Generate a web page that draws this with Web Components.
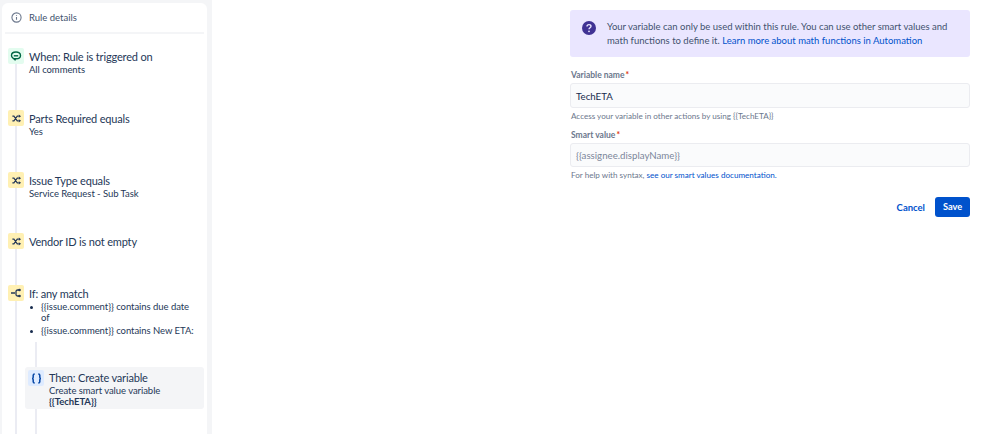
<!DOCTYPE html>
<html>
<head>
<meta charset="utf-8">
<title>Rule details</title>
<style>
  html, body { margin: 0; height: 100%; }
  body { background: #fff; font-family: Lato, "Noto Sans", sans-serif; color: #172b4d; overflow: hidden; }
  rule-page { height: 434px; }
</style>
</head>
<body>
<template id="shuffle-icon">
  <svg width="11" height="11" viewBox="0 0 12 12" fill="none" stroke="#253858" stroke-width="1.3">
    <path d="M1.500 3.500h1.700l3.600 5h1.700M1.500 8.500h1.700l3.600-5h1.700"/>
    <path d="M8.500 1.700v3.600l2.500-1.800zM8.500 6.700v3.600l2.500-1.800z" fill="#253858" stroke="none"/>
  </svg>
</template>
<template id="branch-icon">
  <svg width="12" height="12" viewBox="0 0 12 12" fill="none" stroke="#253858" stroke-width="1.3">
    <path d="M1 6h4M9 3H7.500A1.500 1.500 0 0 0 6 4.500v3A1.500 1.500 0 0 0 7.500 9H9"/>
    <circle cx="9.500" cy="3" r="1.300" fill="#253858" stroke="none"/>
    <circle cx="9.500" cy="9" r="1.300" fill="#253858" stroke="none"/>
  </svg>
</template>
<rule-page>
  <rule-sidebar slot="side">
    <rule-step tone="green" icon="comment" title="When: Rule is triggered on" style="height:62px"><span>All comments</span></rule-step>
    <rule-step tone="yellow" icon="shuffle" title="Parts Required equals" style="height:62px"><span>Yes</span></rule-step>
    <rule-step tone="yellow" icon="shuffle" title="Issue Type equals" style="height:61px"><span>Service Request - Sub Task</span></rule-step>
    <rule-step tone="yellow" icon="shuffle" title="Vendor ID is not empty" style="height:52px"></rule-step>
    <rule-step tone="yellow" icon="branch" title="If: any match" style="height:82px">
      <rule-cond>{{issue.comment}} contains due date of</rule-cond>
      <rule-cond>{{issue.comment}} contains New ETA:</rule-cond>
    </rule-step>
    <rule-step nested tone="blue" icon="braces" title="Then: Create variable">
      <span>Create smart value variable<br><b>{{TechETA}}</b></span>
    </rule-step>
  </rule-sidebar>
  <variable-form slot="main"></variable-form>
</rule-page>
<script>
class RulePage extends HTMLElement {
  connectedCallback() {
    this.attachShadow({ mode: "open" });
    this.shadowRoot.innerHTML = `
      <style>
        :host { display: flex; background: #fff; }
        .side { flex: 0 0 212px; box-sizing: border-box; background: #f4f5f7; padding: 3px 5px 0 2px; overflow: hidden; }
        .main { flex: 1; box-sizing: border-box; padding: 10px 29px 0 358px; }
      </style>
      <div class="side"><slot name="side"></slot></div>
      <div class="main"><slot name="main"></slot></div>
    `;
  }
}

class RuleSidebar extends HTMLElement {
  connectedCallback() {
    this.attachShadow({ mode: "open" });
    this.shadowRoot.innerHTML = `
      <style>
        :host { display: block; background: #fff; border-radius: 6px 6px 0 0; height: 431px; padding: 0 3px; box-sizing: border-box; position: relative; }
        .head { display: flex; align-items: center; gap: 7px; height: 29px; padding-left: 6px; border-bottom: 2px solid #f4f5f7; font-size: 9.5px; color: #42526e; }
        .list { padding: 14px 0 0 3px; position: relative; }
        .rail { position: absolute; width: 2px; bottom: 0; background: #ebecf3; }
        .outer { left: 13px; top: 61px; }
        .inner { left: 33px; top: 339px; }
      </style>
      <div class="head">
        <svg width="11" height="11" viewBox="0 0 12 12" fill="none" stroke="#6b778c" stroke-width="1.2">
          <circle cx="6" cy="6" r="5"/><path d="M6 5.500v3M6 3.200v1"/>
        </svg>
        <span>Rule details</span>
      </div>
      <div class="rail outer"></div>
      <div class="rail inner"></div>
      <div class="list"><slot></slot></div>
    `;
  }
}

const STEP_ICONS = {
  comment: `<svg width="12" height="12" viewBox="0 0 12 12" fill="none" stroke="#006644" stroke-width="1.4"><path d="M6 2c2.500 0 4.500 1.300 4.500 3.400S8.500 8.800 6 8.800c-.5 0-1 0-1.500-.1L5.500 10.300 2.600 7.800C1.900 7.200 1.500 6.300 1.500 5.400 1.500 3.300 3.500 2 6 2z"/><path d="M3.800 5.800h4.400"/></svg>`,
  braces: `<svg width="11" height="11" viewBox="0 0 11 11" fill="none" stroke="#0747a6" stroke-width="1.5"><path d="M3.700 1c-1.100 0-1.500.4-1.500 1.200v2c0 .7-.5 1.300-1.200 1.300.7 0 1.200.6 1.200 1.300v2c0 .8.400 1.200 1.500 1.200M7.300 1c1.100 0 1.500.4 1.500 1.200v2c0 .7.500 1.300 1.200 1.300-.7 0-1.200.6-1.200 1.300v2c0 .8-.4 1.200-1.500 1.200"/></svg>`
};

class RuleStep extends HTMLElement {
  connectedCallback() {
    const tones = { green: "#e3fcef", yellow: "#fff0b3", blue: "#deebff" };
    const name = this.getAttribute("icon");
    const tpl = document.getElementById(name + "-icon");
    const icon = tpl ? tpl.innerHTML : STEP_ICONS[name];
    this.attachShadow({ mode: "open" });
    this.shadowRoot.innerHTML = `
      <style>
        :host { display: block; position: relative; box-sizing: border-box; }
        :host([nested]) { margin-left: 17px; width: 179px; height: 42px; padding: 3px 0 0 3px; border-radius: 3px; background: #f4f5f7; }
        .row { display: flex; gap: 5px; }
        .badge { flex: 0 0 16px; height: 16px; border-radius: 2px; display: flex; align-items: center; justify-content: center; background: ${tones[this.getAttribute("tone")]}; }
        .title { font-size: 11px; letter-spacing: -0.17px; line-height: 14px; color: #253858; margin-top: 2px; }
        .sub { font-size: 9.5px; letter-spacing: -0.05px; line-height: 10.5px; color: #253858; margin-top: 1px; }
        :host([nested]) .title { margin-top: 1px; }
      </style>
      <div class="row">
        <div class="badge">${icon}</div>
        <div>
          <div class="title">${this.getAttribute("title")}</div>
          <div class="sub"><slot></slot></div>
        </div>
      </div>
    `;
  }
}

class RuleCond extends HTMLElement {
  connectedCallback() {
    this.attachShadow({ mode: "open" });
    this.shadowRoot.innerHTML = `
      <style>
        :host { display: block; position: relative; padding-left: 12px; margin-bottom: 3px; width: 156px; }
        .dot { position: absolute; left: 1px; top: 4px; width: 3px; height: 3px; border-radius: 50%; background: #172b4d; }
      </style>
      <span class="dot"></span><slot></slot>
    `;
  }
}

class VariableForm extends HTMLElement {
  connectedCallback() {
    this.attachShadow({ mode: "open" });
    this.shadowRoot.innerHTML = `
      <style>
        :host { display: block; font-size: 9px; color: #172b4d; }
        a { color: #0052cc; text-decoration: none; }
        .notice { display: flex; gap: 11px; background: #eae6ff; border-radius: 3px; height: 47px; box-sizing: border-box; padding: 10px 12px; font-size: 9.5px; line-height: 13.5px; color: #42526e; }
        .notice svg { flex: none; margin-top: 1px; }
        label { display: block; font-size: 8.5px; font-weight: 700; color: #6b778c; line-height: 10px; padding-left: 1px; }
        label i { color: #de350b; font-style: normal; margin-left: -1px; }
        .first { margin-top: 13px; }
        .second { margin-top: 9px; }
        .field { margin-top: 3px; height: 25px; box-sizing: border-box; border: 1px solid #ebecf0; border-radius: 3px; background: #fafbfc; padding: 0 5px; display: flex; align-items: center; font-size: 9.7px; color: #172b4d; }
        .field.empty { color: #7a869a; height: 24px; padding-bottom: 1px; }
        .help { font-size: 8.1px; line-height: 10px; color: #6b778c; margin-top: 3px; padding-left: 1px; }
        .actions { display: flex; justify-content: flex-end; align-items: center; gap: 10px; margin-top: 17px; }
        .save { background: #0052cc; color: #fff; font-size: 9.2px; font-weight: 700; border-radius: 3px; width: 35px; text-align: center; height: 20px; line-height: 20px; }
        .cancel { font-size: 9.5px; font-weight: 700; }
      </style>
      <div class="notice">
        <svg width="14" height="14" viewBox="0 0 14 14"><circle cx="7" cy="7" r="7" fill="#403294"/><path d="M5 5.400C5 4.300 5.900 3.600 7 3.600s2 .7 2 1.700c0 1.500-2 1.500-2 3" fill="none" stroke="#eae6ff" stroke-width="1.400"/><circle cx="7" cy="10.300" r=".9" fill="#eae6ff"/></svg>
        <div>Your variable can only be used within this rule. You can use other smart values and math functions to define it. <a href="#">Learn more about math functions in Automation</a></div>
      </div>
      <label class="first">Variable name <i>*</i></label>
      <div class="field">TechETA</div>
      <div class="help">Access your variable in other actions by using {{TechETA}}</div>
      <label class="second">Smart value <i>*</i></label>
      <div class="field empty">{{assignee.displayName}}</div>
      <div class="help">For help with syntax, <a href="#">see our smart values documentation.</a></div>
      <div class="actions"><a class="cancel" href="#">Cancel</a><a class="save" href="#">Save</a></div>
    `;
  }
}

customElements.define("rule-page", RulePage);
customElements.define("rule-sidebar", RuleSidebar);
customElements.define("rule-step", RuleStep);
customElements.define("rule-cond", RuleCond);
customElements.define("variable-form", VariableForm);
</script>
</body>
</html>
